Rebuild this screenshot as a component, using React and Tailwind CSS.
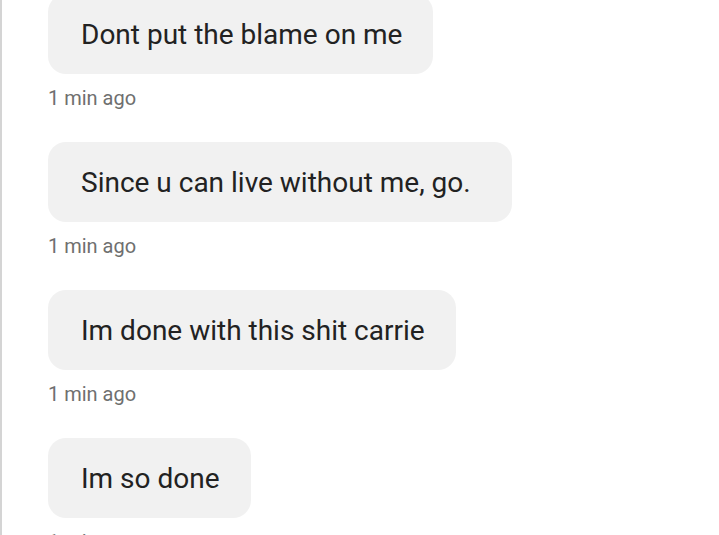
const messages = [
  { text: 'Dont put the blame on me', time: '1 min ago', pad: 'pr-[31px]' },
  { text: 'Since u can live without me, go.', time: '1 min ago', pad: 'pr-[41px]' },
  { text: 'Im done with this shit carrie', time: '1 min ago', pad: 'pr-[31px]' },
  { text: 'Im so done', time: '1 min ago', pad: 'pr-[31px]' },
];

export default function App() {
  return (
    <div
      className="w-[719px] h-[535px] overflow-hidden bg-white border-l-2 border-[#d4d4d4]"
      style={{ fontFamily: 'Roboto, "Liberation Sans", sans-serif' }}
    >
      <div className="flex flex-col items-start pl-[46px] -mt-[6px]">
        {messages.map((m, i) => (
          <div key={i} className="flex flex-col items-start">
            <div className={`h-[80px] flex items-center pt-[2px] pl-[33px] ${m.pad} rounded-[18px] bg-[#f1f1f1] text-[28px] text-[#222]`}>
              {m.text}
            </div>
            <div className="h-[68px] pt-[10px] text-[20px] leading-[28px] text-[#6f6f6f]">
              {m.time}
            </div>
          </div>
        ))}
      </div>
    </div>
  );
}
